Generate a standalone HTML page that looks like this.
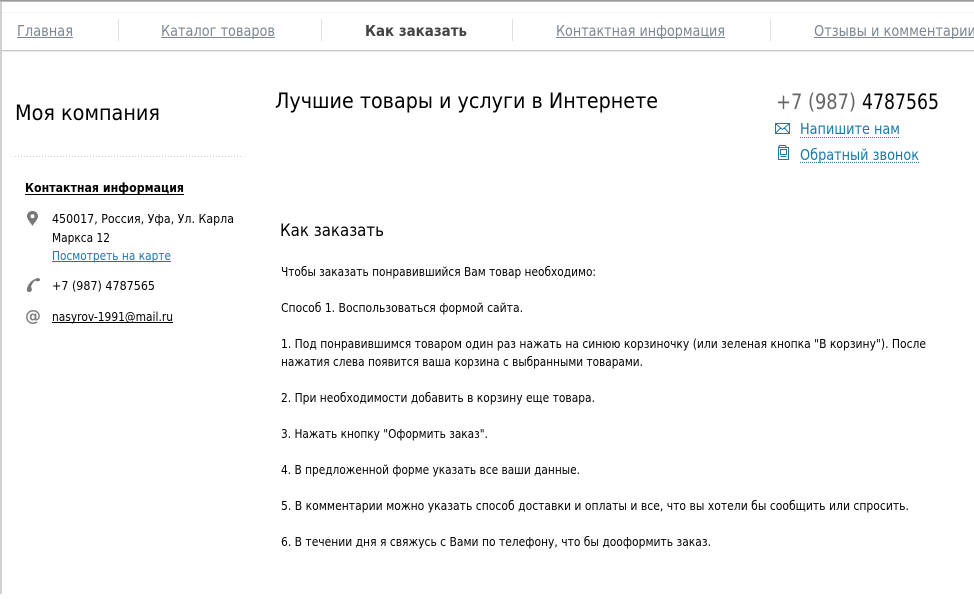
<!DOCTYPE html>
<html lang="ru"><head><meta charset="utf-8"><title>Как заказать</title>
<style>
html,body{margin:0;padding:0;background:#fff;width:974px;height:610px;overflow:hidden}
svg{display:block;position:absolute;left:0;top:0}
text{font-family:"DejaVu Sans","Liberation Sans",sans-serif;white-space:pre}
.n{font-size:15px;fill:#7d8894}
.b{font-size:12.500px;fill:#000}
.l{fill:#1a78ad}
</style></head><body>
<svg width="974" height="610" viewBox="0 0 974 610" xmlns="http://www.w3.org/2000/svg">
<rect x="0" y="0" width="974" height="1" fill="#999"/>
<rect x="0" y="1" width="974" height="1" fill="#bbb"/>
<rect x="0" y="2" width="2" height="592" fill="#d0d0d0"/>
<rect x="2" y="12" width="972" height="1" fill="#f6f6f6"/>
<rect x="2" y="50" width="972" height="1" fill="#c8c8c8"/>
<rect x="2" y="51" width="972" height="1" fill="#ececec"/>
<g fill="#e0e0e0">
<rect x="118" y="19" width="1" height="22"/><rect x="321" y="19" width="1" height="22"/><rect x="512" y="19" width="1" height="22"/><rect x="770" y="19" width="1" height="22"/>
</g>
<text class="n" x="17" y="36" textLength="56" lengthAdjust="spacingAndGlyphs">Главная</text>
<text class="n" x="161" y="36" textLength="114" lengthAdjust="spacingAndGlyphs">Каталог товаров</text>
<text x="365" y="36" font-size="15" font-weight="700" fill="#444" textLength="102" lengthAdjust="spacingAndGlyphs">Как заказать</text>
<text class="n" x="556" y="36" textLength="169" lengthAdjust="spacingAndGlyphs">Контактная информация</text>
<text class="n" x="814" y="36" textLength="162" lengthAdjust="spacingAndGlyphs">Отзывы и комментарии</text>
<g fill="#7d8894">
<rect x="17" y="37" width="56" height="1"/><rect x="161" y="37" width="114" height="1"/><rect x="556" y="37" width="169" height="1"/><rect x="814" y="37" width="160" height="1"/>
</g>

<text x="15" y="120" font-size="21" fill="#000" textLength="145" lengthAdjust="spacingAndGlyphs">Моя компания</text>
<text x="275" y="108" font-size="21" fill="#000" textLength="383" lengthAdjust="spacingAndGlyphs">Лучшие товары и услуги в Интернете</text>
<text x="776" y="109" font-size="21" fill="#666" textLength="80" lengthAdjust="spacingAndGlyphs">+7 (987)</text>
<text x="862" y="109" font-size="21" fill="#000" textLength="77" lengthAdjust="spacingAndGlyphs">4787565</text>
<text class="l" x="800" y="134" font-size="15" textLength="100" lengthAdjust="spacingAndGlyphs">Напишите нам</text>
<text class="l" x="800" y="160" font-size="15" textLength="119" lengthAdjust="spacingAndGlyphs">Обратный звонок</text>
<line x1="800" y1="137.500" x2="900" y2="137.500" stroke="#1a78ad" stroke-dasharray="1 1"/>
<line x1="800" y1="162.500" x2="919" y2="162.500" stroke="#1a78ad" stroke-dasharray="1 1"/>
<path d="M775.500 123.500h14v10h-14zM775.500 123.500l7 6 7-6M775.500 133.500l5-5.500M789.500 133.500l-5-5.500" fill="none" stroke="#1a78ad"/>
<path d="M778.500 147.500h10v12h-10zM778.500 147.500l1-2h6l1 2M780.500 149.500h6v5h-6zM780.500 156.500h6" fill="none" stroke="#1a78ad"/>

<line x1="15" y1="156.500" x2="241" y2="156.500" stroke="#ccc" stroke-dasharray="1 2"/>

<text x="25" y="192" font-size="12.500" font-weight="700" fill="#000" textLength="159" lengthAdjust="spacingAndGlyphs">Контактная информация</text>
<rect x="25" y="194" width="159" height="1" fill="#000"/>
<path d="M32.500 211c-3.300 0-5.500 2.400-5.500 5.300 0 3 3.500 6.300 5.500 9.700 2-3.400 5.500-6.700 5.500-9.700 0-2.900-2.200-5.300-5.500-5.300zM32.500 214.300a2 2 0 1 1 0 4 2 2 0 0 1 0-4z" fill="#777" fill-rule="evenodd"/>
<path d="M27 291c-.5-5 3.500-11 11-13 1 0 2 .5 2 2l-.5 1c-2 .5-3 .5-4-.5-2 1-4 4-4.500 6.500 1 1 1 2.500 .5 4-.5 1-3.500 1.500-4.500 0z" fill="#777"/>
<text x="25" y="321" font-size="16" font-weight="700" fill="#808080" textLength="16" lengthAdjust="spacingAndGlyphs">@</text>
<text class="b" x="52" y="223" textLength="182" lengthAdjust="spacingAndGlyphs">450017, Россия, Уфа, Ул. Карла</text>
<text class="b" x="52" y="242" textLength="58" lengthAdjust="spacingAndGlyphs">Маркса 12</text>
<text class="b l" x="52" y="260" textLength="119" lengthAdjust="spacingAndGlyphs" style="fill:#1a78ad">Посмотреть на карте</text>
<rect x="52" y="261" width="119" height="1" fill="#1a78ad"/>
<text class="b" x="52" y="290" textLength="103" lengthAdjust="spacingAndGlyphs">+7 (987) 4787565</text>
<text class="b" x="52" y="321" textLength="121" lengthAdjust="spacingAndGlyphs">nasyrov-1991@mail.ru</text>
<rect x="52" y="322" width="121" height="1" fill="#000"/>

<text x="280" y="236" font-size="17" fill="#000" textLength="104" lengthAdjust="spacingAndGlyphs">Как заказать</text>
<text class="b" x="281" y="276" textLength="315" lengthAdjust="spacingAndGlyphs">Чтобы заказать понравившийся Вам товар необходимо:</text>
<text class="b" x="281" y="312" textLength="242" lengthAdjust="spacingAndGlyphs">Способ 1. Воспользоваться формой сайта.</text>
<text class="b" x="281" y="348" textLength="645" lengthAdjust="spacingAndGlyphs">1. Под понравившимся товаром один раз нажать на синюю корзиночку (или зеленая кнопка "В корзину"). После</text>
<text class="b" x="281" y="366" textLength="362" lengthAdjust="spacingAndGlyphs">нажатия слева появится ваша корзина с выбранными товарами.</text>
<text class="b" x="281" y="402" textLength="314" lengthAdjust="spacingAndGlyphs">2. При необходимости добавить в корзину еще товара.</text>
<text class="b" x="281" y="438" textLength="207" lengthAdjust="spacingAndGlyphs">3. Нажать кнопку "Оформить заказ".</text>
<text class="b" x="281" y="474" textLength="299" lengthAdjust="spacingAndGlyphs">4. В предложенной форме указать все ваши данные.</text>
<text class="b" x="281" y="510" textLength="628" lengthAdjust="spacingAndGlyphs">5. В комментарии можно указать способ доставки и оплаты и все, что вы хотели бы сообщить или спросить.</text>
<text class="b" x="281" y="546" textLength="430" lengthAdjust="spacingAndGlyphs">6. В течении дня я свяжусь с Вами по телефону, что бы дооформить заказ.</text>
</svg>
</body></html>
